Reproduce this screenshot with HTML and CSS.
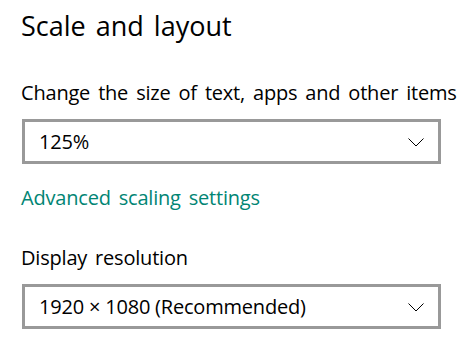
FILE: index.html
```html
<!DOCTYPE html>
<html>
<head>
<meta charset="utf-8">
<link rel="stylesheet" href="styles.css">
</head>
<body>
<div class="page">
  <h1 class="title">Scale and layout</h1>
  <div class="label first">Change the size of text, apps and other items</div>
  <div class="combo">
    <span class="value">125%</span>
    <svg class="chev" width="16" height="9" viewBox="0 0 16 9"><path d="M0.5 0.5 L8 8 L15.5 0.5" fill="none" stroke="#000" stroke-width="1"/></svg>
  </div>
  <a class="link" href="#">Advanced scaling settings</a>
  <div class="label second">Display resolution</div>
  <div class="combo">
    <span class="value">1920 × 1080 (Recommended)</span>
    <svg class="chev" width="16" height="9" viewBox="0 0 16 9"><path d="M0.5 0.5 L8 8 L15.5 0.5" fill="none" stroke="#000" stroke-width="1"/></svg>
  </div>
</div>
</body>
</html>
```
FILE: styles.css
```css
html, body {
  margin: 0;
  padding: 0;
  background: #fff;
}
body {
  font-family: "Open Sans", "Noto Sans", sans-serif;
  color: #000;
}
.page {
  padding: 8px 0 0 21px;
  display: flex;
  flex-direction: column;
  align-items: flex-start;
}
.title {
  margin: 0;
  font-weight: 400;
  font-size: 27px;
  line-height: 36px;
  word-spacing: 3px;
}
.label, .value, .link {
  font-size: 20px;
  line-height: 28px;
  letter-spacing: -0.2px;
  word-spacing: 3px;
}
.value {
  word-spacing: 0;
}
.label.first { margin-top: 35px; }
.label.second { margin-top: 32px; }
.combo {
  margin-top: 12px;
  margin-left: 1px;
  box-sizing: border-box;
  width: 419px;
  height: 45px;
  border: 3px solid #999;
  display: flex;
  align-items: center;
  justify-content: space-between;
  padding: 0 14px 0 14px;
}
.chev {
  display: block;
  margin-top: 1px;
}
.link {
  margin-top: 20px;
  color: #018574;
  text-decoration: none;
}
```
